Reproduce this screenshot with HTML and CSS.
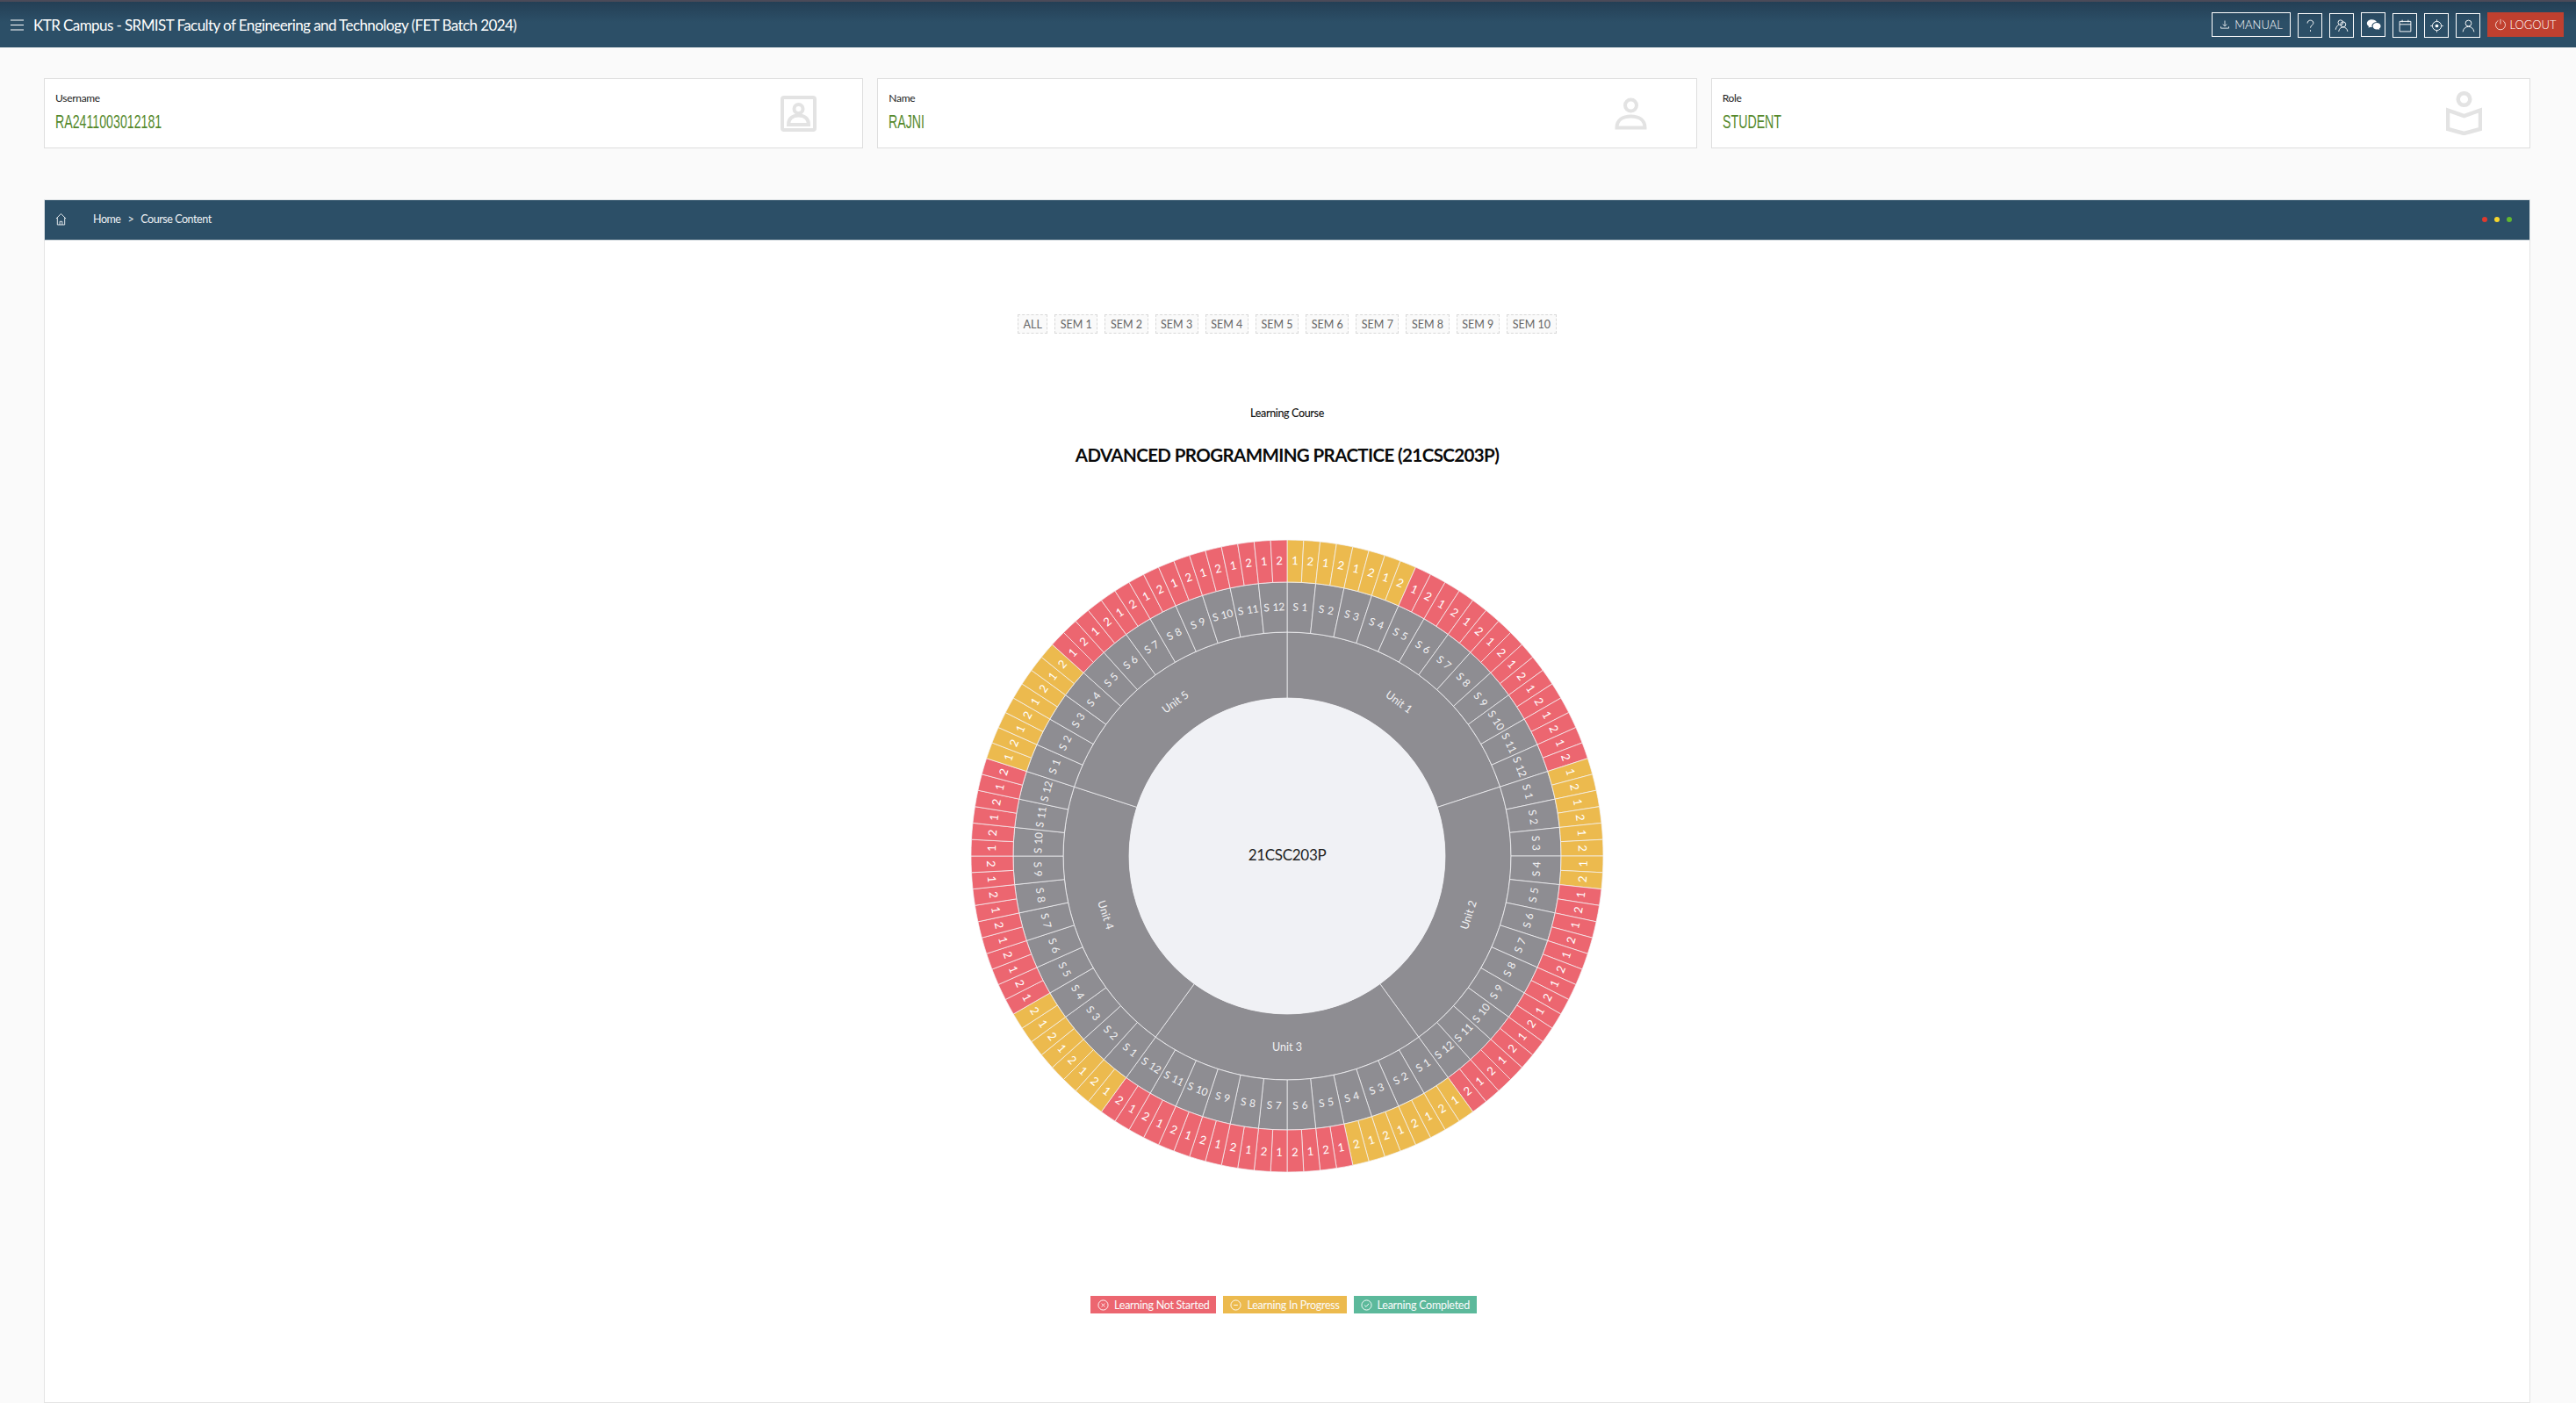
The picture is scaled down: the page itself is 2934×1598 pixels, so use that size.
FILE: index.html
```html
<!DOCTYPE html>
<html lang="en">
<head>
<meta charset="utf-8">
<title>Course Content</title>
<link rel="stylesheet" href="styles.css">
</head>
<body>
<div class="app">
  <header class="topbar">
    <div class="brand">
      <svg class="menu-icon" viewBox="0 0 15 13"><path d="M0 1h15M0 6.500h15M0 12h15"/></svg>
      <span class="brand-title">KTR Campus - SRMIST Faculty of Engineering and Technology (FET Batch 2024)</span>
    </div>
    <nav class="actions">
      <a class="btn btn-manual"><svg class="ico" viewBox="0 0 16 16"><path d="M8 2v8M5 7.500 8 10.500 11 7.500M2 11v2.500h12V11"/></svg>MANUAL</a>
      <a class="btn btn-icon btn-low"><svg class="ico ico-l" viewBox="0 0 20 20"><path d="M6 6.500C6 4 7.800 2.500 10 2.500s4 1.500 4 3.600c0 3-4 3.100-4 6.400M10 15.500v2"/></svg></a>
      <a class="btn btn-icon btn-low"><svg class="ico ico-l" viewBox="0 0 20 20"><circle cx="8" cy="5.500" r="3.300"/><path d="M1.500 15c.6-3.500 2.200-5.500 4-6.300"/><circle cx="11.500" cy="8" r="3.500"/><path d="M5.500 17.500c.6-3.800 3-5.800 6-5.800s5.400 2 6 5.800"/></svg></a>
      <a class="btn btn-icon"><svg class="ico ico-l" viewBox="0 0 20 20"><path class="solid" d="M7.500 2.500C3.900 2.500 1 4.800 1 7.700c0 1.700 1 3.100 2.500 4.100L3 13.800l2.300-1.200c.7.200 1.400.3 2.200.3h.4c-.2-.5-.3-1-.3-1.500 0-2.900 2.800-5.200 6.200-5.200h.4C13.200 4 10.600 2.500 7.500 2.500z"/><path class="solid" d="M19.500 11.400c0-2.400-2.400-4.400-5.300-4.400S8.900 9 8.900 11.400s2.400 4.400 5.300 4.400c.6 0 1.200-.1 1.800-.3l1.900 1-.5-1.600c1.300-.9 2.100-2.100 2.100-3.500z"/></svg></a>
      <a class="btn btn-icon btn-low"><svg class="ico ico-l" viewBox="0 0 20 20"><path d="M2.500 4h15v13.500h-15zM2.500 8h15M6 2v3M14 2v3"/></svg></a>
      <a class="btn btn-icon btn-low"><svg class="ico ico-l" viewBox="0 0 20 20"><circle cx="10" cy="10" r="6"/><circle class="solid" cx="10" cy="10" r="2.200"/><path d="M10 1.500V4M10 16v2.500M1.500 10H4M16 10h2.500"/></svg></a>
      <a class="btn btn-icon btn-low"><svg class="ico ico-l" viewBox="0 0 20 20"><circle cx="10" cy="6.500" r="4"/><path d="M2.500 18c.7-4.500 3.700-7 7.500-7s6.800 2.500 7.500 7"/></svg></a>
      <a class="btn btn-logout"><svg class="ico ico-p" viewBox="0 0 16 16"><path d="M5 2.800a6.300 6.300 0 1 0 6 0M8 1v6.500"/></svg>LOGOUT</a>
    </nav>
  </header>

  <main class="page">
    <section class="info-cards">
      <div class="info-card">
        <div class="info-text"><div class="info-label">Username</div><div class="info-value">RA2411003012181</div></div>
        <svg class="info-icon icon-badge" viewBox="0 0 41 41"><rect x="2" y="2" width="37" height="37" rx="2"/><circle cx="20.500" cy="15" r="5"/><path d="M9 33c0-7 5-10.500 11.500-10.500S32 26 32 33z"/></svg>
      </div>
      <div class="info-card">
        <div class="info-text"><div class="info-label">Name</div><div class="info-value">RAJNI</div></div>
        <svg class="info-icon icon-person" viewBox="0 0 37 37"><circle cx="18.500" cy="9" r="6.500"/><path d="M2.500 34.500c0-9 7-13 16-13s16 4 16 13z"/></svg>
      </div>
      <div class="info-card">
        <div class="info-text"><div class="info-label">Role</div><div class="info-value">STUDENT</div></div>
        <svg class="info-icon icon-reader" viewBox="0 0 41 50"><circle cx="20.500" cy="9" r="6.800"/><path d="M2 21.500 20.500 28 39 21.500v21.500L20.500 48 2 43z"/></svg>
      </div>
    </section>

    <section class="panel">
      <div class="crumbs">
        <svg class="home-icon" viewBox="0 0 14 16"><path d="M1 7.500 7 1.500l6 6M2.500 6.500V15h9V6.500M5.500 15v-4h3v4"/></svg>
        <span class="crumb">Home</span><span class="crumb-sep">&gt;</span><span class="crumb">Course Content</span>
        <span class="dots"><i class="dot dot-r"></i><i class="dot dot-y"></i><i class="dot dot-g"></i></span>
      </div>
      <div class="panel-body">
        <div class="sem-row">
          <button class="sem sem-all">ALL</button>
          <button class="sem">SEM 1</button>
          <button class="sem">SEM 2</button>
          <button class="sem">SEM 3</button>
          <button class="sem">SEM 4</button>
          <button class="sem">SEM 5</button>
          <button class="sem">SEM 6</button>
          <button class="sem">SEM 7</button>
          <button class="sem">SEM 8</button>
          <button class="sem">SEM 9</button>
          <button class="sem">SEM 10</button>
        </div>
        <div class="sub-title">Learning Course</div>
        <h1 class="course-title">ADVANCED PROGRAMMING PRACTICE (21CSC203P)</h1>
        <svg id="wheel" class="wheel" viewBox="-360 -360 720 720" width="720" height="720"></svg>
        <div class="legend">
          <span class="tag tag-red"><svg class="tag-ico" viewBox="0 0 14 14"><circle cx="7" cy="7" r="6"/><path d="M5 5l4 4M9 5 5 9"/></svg>Learning Not Started</span>
          <span class="tag tag-yellow"><svg class="tag-ico" viewBox="0 0 14 14"><circle cx="7" cy="7" r="6"/><path d="M4.500 7h5"/></svg>Learning In Progress</span>
          <span class="tag tag-green"><svg class="tag-ico" viewBox="0 0 14 14"><circle cx="7" cy="7" r="6"/><path d="M4.500 7.200 6.400 9 9.800 5.200"/></svg>Learning Completed</span>
        </div>
      </div>
    </section>
  </main>
</div>
<script src="chart.js"></script>
</body>
</html>
```
FILE: styles.css
```css
* { box-sizing: border-box; }
html, body { margin: 0; padding: 0; height: 100%; }
body { background: #fafafa; font-family: "Lato", "Liberation Sans", sans-serif; color: #222; }
.app { height: 100vh; overflow: hidden; display: flex; flex-direction: column; }

.topbar { flex: none; height: 54px; border-top: 2px solid #4b4a58; background: linear-gradient(#243f55, #2c4f67 45%); display: flex; align-items: center; justify-content: space-between; padding: 0 14px 0 12px; }
.brand { display: flex; align-items: center; gap: 11px; }
.menu-icon { width: 15px; height: 13px; fill: none; stroke: #fff; stroke-width: 1.200; }
.brand-title { color: #fff; font-size: 17px; letter-spacing: -.58px; white-space: nowrap; }
.actions { display: flex; align-items: center; gap: 8px; }
.btn { display: flex; align-items: center; justify-content: center; height: 28px; border: 1px solid #fff; color: #fff; font-size: 13px; font-weight: 300; }
.btn-manual { width: 90px; gap: 5px; }
.btn-icon { width: 28px; }
.btn-low { position: relative; top: 1px; }
.btn-logout { width: 87px; gap: 3px; background: #c0402f; border-color: #c0402f; }
.ico { width: 12px; height: 12px; fill: none; stroke: #fff; stroke-width: 1.100; }
.ico-l { width: 17px; height: 17px; }
.ico-p { width: 14px; height: 14px; stroke: #f3d8d2; }
.solid { fill: #fff; stroke: none; }

.page { flex: 1; min-height: 0; display: flex; flex-direction: column; padding: 35px 52px 0 50px; }
.info-cards { flex: none; display: grid; grid-template-columns: repeat(3, 1fr); gap: 16px; }
.info-card { height: 80px; background: #fff; border: 1px solid #dedede; display: flex; align-items: center; justify-content: space-between; padding: 0 50px 0 12px; }
.info-text { padding-bottom: 2px; }
.info-label { font-size: 12px; letter-spacing: -.3px; line-height: 16px; color: #222; }
.info-value { margin-top: 6px; font-family: "Liberation Sans", sans-serif; font-size: 22px; line-height: 26px; color: #55892b; transform: scaleX(.645); transform-origin: left; }
.info-icon { flex: none; fill: none; stroke: #e3e3e3; stroke-width: 4; }
.icon-badge { width: 41px; height: 41px; margin-right: 2px; }
.icon-person { width: 37px; height: 37px; margin-right: 6px; }
.icon-reader { width: 41px; height: 50px; margin-right: 4px; stroke-width: 4.500; }

.panel { flex: 1; min-height: 0; margin-top: 58px; display: flex; flex-direction: column; }
.crumbs { flex: none; height: 47px; background: #2c4f67; border: 1px solid #dfe3e6; border-bottom-color: #cfd6db; display: flex; align-items: center; padding: 0 20px 2px 12px; color: #eef2f5; font-size: 12.500px; letter-spacing: -.45px; }
.home-icon { width: 13px; height: 15px; margin-right: 30px; fill: none; stroke: #eef2f5; stroke-width: 1; }
.crumb-sep { margin: 0 8px; }
.dots { margin-left: auto; display: flex; gap: 8px; }
.dot { width: 6px; height: 6px; border-radius: 50%; }
.dot-r { background: #df3a2e; }
.dot-y { background: #f6d52d; }
.dot-g { background: #62b82f; }

.panel-body { flex: 1; background: #fff; border: 1px solid #e4e4e4; border-top: 0; display: flex; flex-direction: column; align-items: center; padding-top: 84px; }
.sem-row { display: flex; gap: 8px; }
.sem { height: 22px; width: 49.200px; padding: 0; background: #fafafa; border: 1px dashed #d9d9d9; color: #666; font-family: inherit; font-size: 12.500px; }
.sem-all { width: 34px; }
.sem:last-child { width: 57px; }
.sub-title { margin-top: 81px; height: 20px; line-height: 20px; font-size: 12.500px; letter-spacing: -.35px; font-weight: 500; color: #111; }
.course-title { margin: 22px 0 0; height: 30px; line-height: 30px; font-size: 20.500px; letter-spacing: -.6px; font-weight: 700; color: #0a0a0a; }
.wheel { flex: none; display: block; margin-top: 82px; overflow: visible; }
.unit-cell { fill: #8e8d92; }
.session-cell { fill: #8e8d92; }
.cell-red { fill: #ec6670; }
.cell-yellow { fill: #ecba4e; }
.seg { stroke: #f4f4f7; stroke-opacity: .72; stroke-width: 1; }
.wheel-text { font-family: "Lato", "Liberation Sans", sans-serif; text-anchor: middle; dominant-baseline: central; fill: #f1f1f3; }
.unit-text { font-size: 12.500px; }
.session-text { font-size: 12px; letter-spacing: -.2px; word-spacing: 1px; }
.cell-text { font-size: 13px; fill: #fff; }
.hub { fill: #f0f1f5; }
.hub-text { font-size: 17px; letter-spacing: -.3px; fill: #222; }

.legend { margin-top: 141px; padding-right: 8px; display: flex; gap: 8px; }
.tag { height: 20px; display: flex; align-items: center; gap: 6px; padding: 0 8px; color: #fbfbfb; font-size: 12.500px; letter-spacing: -.27px; white-space: nowrap; }
.tag-ico { width: 13px; height: 13px; fill: none; stroke: #fff; stroke-width: 1; }
.tag-red { background: #ec6670; }
.tag-yellow { background: #ecba4e; }
.tag-green { background: #5cb99b; }
```
FILE: chart.js
```js
var NS = "http://www.w3.org/2000/svg";
var svg = document.getElementById("wheel");

function pt(r, deg) {
  var a = deg * Math.PI / 180;
  return (r * Math.sin(a)).toFixed(2) + " " + (-r * Math.cos(a)).toFixed(2);
}
function sector(r0, r1, a0, a1, cls) {
  var p = document.createElementNS(NS, "path");
  p.setAttribute("d", "M" + pt(r0, a0) + "L" + pt(r1, a0) +
    "A" + r1 + " " + r1 + " 0 0 1 " + pt(r1, a1) + "L" + pt(r0, a1) +
    "A" + r0 + " " + r0 + " 0 0 0 " + pt(r0, a0) + "Z");
  p.setAttribute("class", "seg " + cls);
  svg.appendChild(p);
}
function label(str, r, deg, cls) {
  var a = deg * Math.PI / 180;
  var t = document.createElementNS(NS, "text");
  var rot = (deg > 90 && deg < 270) ? deg + 180 : deg;
  var x = (r * Math.sin(a)).toFixed(2), y = (-r * Math.cos(a)).toFixed(2);
  t.setAttribute("x", x);
  t.setAttribute("y", y);
  t.setAttribute("transform", "rotate(" + rot + " " + x + " " + y + ")");
  t.setAttribute("class", "wheel-text " + cls);
  t.textContent = str;
  svg.appendChild(t);
}

for (var u = 0; u < 5; u++) {
  var ua = u * 72;
  sector(180, 255, ua, ua + 72, "unit-cell");
  for (var s = 0; s < 12; s++) {
    var sa = ua + s * 6;
    sector(255, 312, sa, sa + 6, "session-cell");
    for (var c = 0; c < 2; c++) {
      var ca = sa + c * 3;
      sector(312, 360, ca, ca + 3, s < 4 ? "cell-yellow" : "cell-red");
    }
  }
}
for (var u2 = 0; u2 < 5; u2++) {
  var b = u2 * 72;
  label("Unit " + (u2 + 1), 217, b + 36, "unit-text");
  for (var s2 = 0; s2 < 12; s2++) {
    var sb = b + s2 * 6;
    label("S " + (s2 + 1), 284, sb + 3, "session-text");
    label("1", 337, sb + 1.5, "cell-text");
    label("2", 337, sb + 4.5, "cell-text");
  }
}
var hub = document.createElementNS(NS, "circle");
hub.setAttribute("r", "180");
hub.setAttribute("class", "hub");
svg.appendChild(hub);
var ht = document.createElementNS(NS, "text");
ht.setAttribute("x", "0");
ht.setAttribute("y", "-2");
ht.setAttribute("class", "wheel-text hub-text");
ht.textContent = "21CSC203P";
svg.appendChild(ht);
```
